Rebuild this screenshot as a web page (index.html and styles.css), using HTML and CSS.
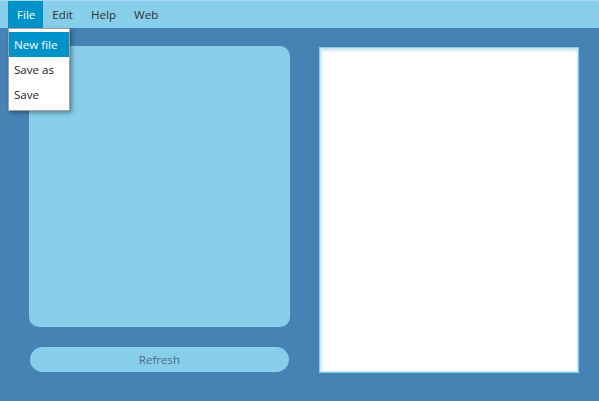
FILE: index.html
```html
<!DOCTYPE html>
<html>
<head>
<meta charset="utf-8">
<link rel="stylesheet" href="styles.css">
</head>
<body>
<div class="menubar">
  <div class="menu-item active">File</div>
  <div class="menu-item">Edit</div>
  <div class="menu-item">Help</div>
  <div class="menu-item">Web</div>
</div>
<div class="dropdown">
  <div class="dd-item selected">New file</div>
  <div class="dd-item">Save as</div>
  <div class="dd-item">Save</div>
</div>
<div class="main">
  <div class="left">
    <div class="panel"></div>
    <div class="refresh">Refresh</div>
  </div>
  <div class="canvas"></div>
</div>
</body>
</html>
```
FILE: styles.css
```css
html, body {
  margin: 0;
  padding: 0;
  width: 599px;
  height: 401px;
  overflow: hidden;
  background: #4682b4;
  font-family: "Open Sans", "Noto Sans", sans-serif;
  font-size: 11.6px;
}
.menubar {
  display: flex;
  height: 27px;
  margin-top: 1px;
  padding-left: 8px;
  background: #87ceeb;
  box-shadow: 0 -1px 0 #a6dcf0;
}
.menu-item {
  padding: 0 9px;
  line-height: 27px;
  color: #333;
}
.menu-item.active {
  padding: 0 8px 0 9px;
  background: #0093c9;
  color: #fff;
}
.dropdown {
  position: absolute;
  top: 28px;
  left: 8px;
  width: 60px;
  padding: 3px 0;
  background: #fff;
  border: 1px solid #a0a0a0;
  box-shadow: 2px 2px 4px rgba(0,0,0,0.35);
}
.dd-item {
  height: 25px;
  line-height: 25px;
  padding-left: 5px;
  color: #222;
}
.dd-item.selected {
  background: #0093c9;
  color: #fff;
}
.main {
  display: flex;
  padding: 18px 0 0 29px;
}
.left {
  display: flex;
  flex-direction: column;
  width: 261px;
}
.panel {
  height: 281px;
  background: #87ceeb;
  border-radius: 10px;
}
.refresh {
  margin: 20px 0 0 1px;
  width: 259px;
  height: 25px;
  line-height: 25px;
  border-radius: 13px;
  background: #87ceeb;
  color: #4f6f85;
  text-align: center;
}
.canvas {
  margin: 1px 0 0 29px;
  width: 258px;
  height: 324px;
  background: #fff;
  border: 1px solid #87ceeb;
  outline: 1px solid #c4e8f6;
  outline-offset: -2px;
  box-shadow: inset 1px 2px 3px rgba(70,130,180,0.35);
}
```
